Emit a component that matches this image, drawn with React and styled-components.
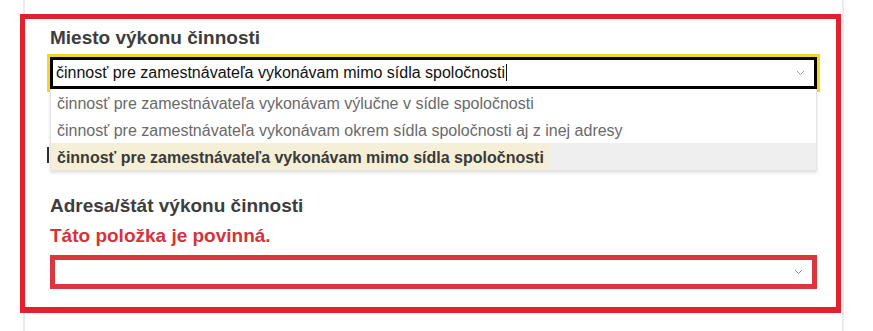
import React from "react";
import styled, { createGlobalStyle } from "styled-components";

const Global = createGlobalStyle`
  html, body { margin: 0; padding: 0; background: #fff; }
  body { font-family: "Liberation Sans", Arial, sans-serif; }
`;

const Page = styled.div`
  margin-left: 23px;
  width: 817px;
  min-height: 331px;
  border-left: 2px solid #e9ebee;
  border-right: 2px solid #e9ebee;
  padding-top: 14px;
  box-sizing: content-box;
`;

const Section = styled.section`
  margin-left: -5px;
  width: 821px;
  height: 299px;
  box-sizing: border-box;
  border: 5px solid #e3212c;
  border-bottom-width: 6px;
  background: #fff;
  padding: 8px 19px 0 25px;
  display: flex;
  flex-direction: column;
`;

const Label = styled.div`
  font-size: 19px;
  font-weight: 700;
  color: #3d3d3d;
  line-height: normal;
  margin-top: ${(p) => p.$mt || 0}px;
`;

const ErrorText = styled.div`
  font-size: 19px;
  font-weight: 700;
  color: #d5333b;
  margin-top: 8px;
`;

const SelectWrap = styled.div`
  position: relative;
  margin-top: 8px;
  width: 767px;
`;

const SelectBox = styled.div`
  box-sizing: border-box;
  height: ${(p) => p.$h}px;
  border: ${(p) => p.$bw}px solid ${(p) => p.$color};
  outline: ${(p) => (p.$focus ? "3px solid #f6d523" : "none")};
  display: flex;
  align-items: center;
  padding-left: 3px;
  padding-right: 9px;
  font-size: 16px;
  color: #111;
  background: #fff;
`;

const Value = styled.span`
  flex: 1;
  white-space: nowrap;
  line-height: 26px;
`;

const Caret = styled.span`
  display: inline-block;
  width: 1px;
  height: 17px;
  background: #111;
  vertical-align: -3px;
  margin-left: 1px;
`;

const Chevron = ({ color }) => (
  <svg width="9" height="6" viewBox="0 0 9 6">
    <polyline
      points="1,1 4.5,4.5 8,1"
      fill="none"
      stroke={color}
      strokeWidth="1"
    />
  </svg>
);

const Menu = styled.ul`
  position: absolute;
  left: 0;
  right: 0;
  top: 100%;
  margin: 0;
  padding: 0;
  list-style: none;
  background: #fff;
  border: 1px solid #e4e4e4;
  border-top: none;
  box-shadow: 0 2px 3px rgba(0, 0, 0, 0.12);
  z-index: 2;
`;

const Option = styled.li`
  height: 27px;
  box-sizing: border-box;
  padding: 2px 0 0 ${(p) => (p.$active ? 1 : 6)}px;
  line-height: 25px;
  font-size: 16px;
  white-space: nowrap;
  color: ${(p) => (p.$active ? "#3a3a3a" : "#6a6a6a")};
  font-weight: ${(p) => (p.$active ? 700 : 400)};
  background: ${(p) => (p.$active ? "#efefef" : "#fff")};
`;

const Mark = styled.span`
  display: inline-block;
  height: 25px;
  margin-top: -2px;
  padding: 2px 5px 0;
  background: #f4efd6;
`;

const UnderEdge = styled.div`
  margin-top: 58px;
  margin-left: -3px;
  width: 2px;
  height: 16px;
  background: #2e2e2e;
`;

const options = [
  "činnosť pre zamestnávateľa vykonávam výlučne v sídle spoločnosti",
  "činnosť pre zamestnávateľa vykonávam okrem sídla spoločnosti aj z inej adresy",
  "činnosť pre zamestnávateľa vykonávam mimo sídla spoločnosti",
];

export default function App() {
  return (
    <>
      <Global />
      <Page>
        <Section>
          <Label>Miesto výkonu činnosti</Label>
          <SelectWrap>
            <SelectBox $h={32} $bw={3} $color="#000" $focus>
              <Value>
                činnosť pre zamestnávateľa vykonávam mimo sídla spoločnosti
                <Caret />
              </Value>
              <Chevron color="#9a9a9a" />
            </SelectBox>
            <Menu>
              {options.map((o, i) => (
                <Option key={i} $active={i === 2}>
                  {i === 2 ? <Mark>{o}</Mark> : o}
                </Option>
              ))}
            </Menu>
          </SelectWrap>
          <UnderEdge />
          <Label $mt={32}>Adresa/štát výkonu činnosti</Label>
          <ErrorText>Táto položka je povinná.</ErrorText>
          <SelectWrap>
            <SelectBox $h={34} $bw={5} $color="#d9363e">
              <Value />
              <Chevron color="#b08088" />
            </SelectBox>
          </SelectWrap>
        </Section>
      </Page>
    </>
  );
}
